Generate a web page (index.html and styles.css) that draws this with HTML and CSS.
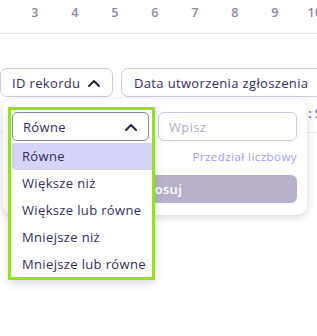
FILE: index.html
```html
<!DOCTYPE html>
<html lang="pl">
<head>
<meta charset="utf-8">
<link rel="stylesheet" href="styles.css">
</head>
<body>
<div class="page">
  <div class="nums">
    <span>3</span><span>4</span><span>5</span><span>6</span><span>7</span><span>8</span><span>9</span><span>10</span>
  </div>
  <div class="filters">
    <div class="chip chip-id">ID rekordu
      <svg class="chev" width="12" height="8" viewBox="0 0 12 8"><path d="M1 7 L6 2 L11 7" fill="none" stroke="#2b2442" stroke-width="2" stroke-linecap="round" stroke-linejoin="round"/></svg>
    </div>
    <div class="chip chip-date">Data utworzenia zgłoszenia</div>
  </div>
  <div class="behind"><span class="behind-text">: S</span></div>

  <div class="panel">
    <div class="panel-top">
      <div class="select-slot"></div>
      <div class="input">Wpisz</div>
    </div>
    <div class="range">Przedział liczbowy</div>
    <div class="apply">Zastosuj</div>

    <div class="combo">
      <div class="select">
        <span>Równe</span>
        <svg class="chev" width="12" height="8" viewBox="0 0 12 8"><path d="M1 7 L6 2 L11 7" fill="none" stroke="#2b2442" stroke-width="2" stroke-linecap="round" stroke-linejoin="round"/></svg>
      </div>
      <ul class="list">
        <li class="active">Równe</li>
        <li>Większe niż</li>
        <li>Większe lub równe</li>
        <li>Mniejsze niż</li>
        <li>Mniejsze lub równe</li>
      </ul>
    </div>
  </div>
</div>
</body>
</html>
```
FILE: styles.css
```css
* { box-sizing: border-box; }
html, body { margin: 0; padding: 0; background: #fff; }
body {
  font-family: "Open Sans", "Noto Sans", sans-serif;
  color: #342d63;
  width: 317px;
  height: 336px;
  overflow: hidden;
}
.page { position: relative; width: 317px; height: 336px; overflow: hidden; }

.nums {
  display: flex;
  padding-left: 15px;
  height: 34px;
  border-bottom: 1px solid #e9e8ef;
  white-space: nowrap;
}
.nums span {
  flex: 0 0 40px;
  text-align: center;
  font-size: 12.5px;
  font-weight: 600;
  color: #8d8b99;
  line-height: 26px;
  letter-spacing: 0.3px;
}

.filters {
  display: flex;
  gap: 8px;
  margin-top: 34px;
  white-space: nowrap;
}
.chip {
  flex: 0 0 auto;
  height: 29px;
  border: 1px solid #cfcbdd;
  border-radius: 7px;
  padding: 0 12px 0 11px;
  display: flex;
  align-items: center;
  font-size: 13px;
  letter-spacing: 0.35px;
  color: #342d63;
}
.chip-id { width: 113px; justify-content: space-between; }
.chip-date { padding-left: 12px; padding-right: 20px; }

.behind {
  display: flex;
  justify-content: flex-end;
  margin-top: 6px;
  height: 30px;
  border-bottom: 1px solid #e9e8ef;
}
.behind-text {
  font-size: 13px;
  color: #6a60d8;
  font-weight: 600;
  line-height: 20px;
  margin-right: -5px;
  white-space: nowrap;
}

.panel {
  position: absolute;
  left: 3px;
  top: 99px;
  width: 304px;
  height: 116px;
  background: #fff;
  border-radius: 10px;
  box-shadow: 0 2px 8px rgba(40, 30, 80, 0.18);
  padding: 13px 10px 12px 9px;
}
.panel-top {
  display: grid;
  grid-template-columns: 137px 139px;
  gap: 9px;
}
.select-slot { height: 29px; }
.input {
  height: 29px;
  border: 1px solid #cdc9de;
  border-radius: 6px;
  padding-left: 10px;
  display: flex;
  align-items: center;
  font-size: 13px;
  letter-spacing: 0.35px;
  color: #b2adc2;
}
.range {
  margin-top: 8px;
  text-align: right;
  font-size: 11.5px;
  letter-spacing: 0.45px;
  line-height: 16px;
  color: #a19cf0;
}
.apply {
  margin-top: 10px;
  height: 28px;
  border-radius: 6px;
  background: #b9b1c7;
  color: #fff;
  font-size: 13px;
  font-weight: 600;
  letter-spacing: 0.35px;
  display: flex;
  align-items: center;
  justify-content: center;
}

.combo {
  position: absolute;
  left: 5px;
  top: 8px;
  width: 147px;
  height: 173px;
  border: 3px solid #98e01c;
  background: #fff;
  padding: 2px 0 0 1px;
  box-shadow: 0 4px 8px rgba(40, 30, 80, 0.15);
}
.select {
  width: 137px;
  height: 29px;
  border: 1px solid #8a82a6;
  border-radius: 5px;
  display: flex;
  align-items: center;
  justify-content: space-between;
  padding: 0 11px 0 10px;
  font-size: 13px;
  letter-spacing: 0.35px;
}
.list {
  list-style: none;
  margin: 2px 0 0 0;
  padding: 0;
}
.list li {
  height: 27px;
  line-height: 27px;
  padding-left: 10px;
  font-size: 13px;
  letter-spacing: 0.35px;
  color: #342d63;
  white-space: nowrap;
}
.list li.active {
  background: #d4d4f7;
  border-radius: 3px 0 0 3px;
}
```
